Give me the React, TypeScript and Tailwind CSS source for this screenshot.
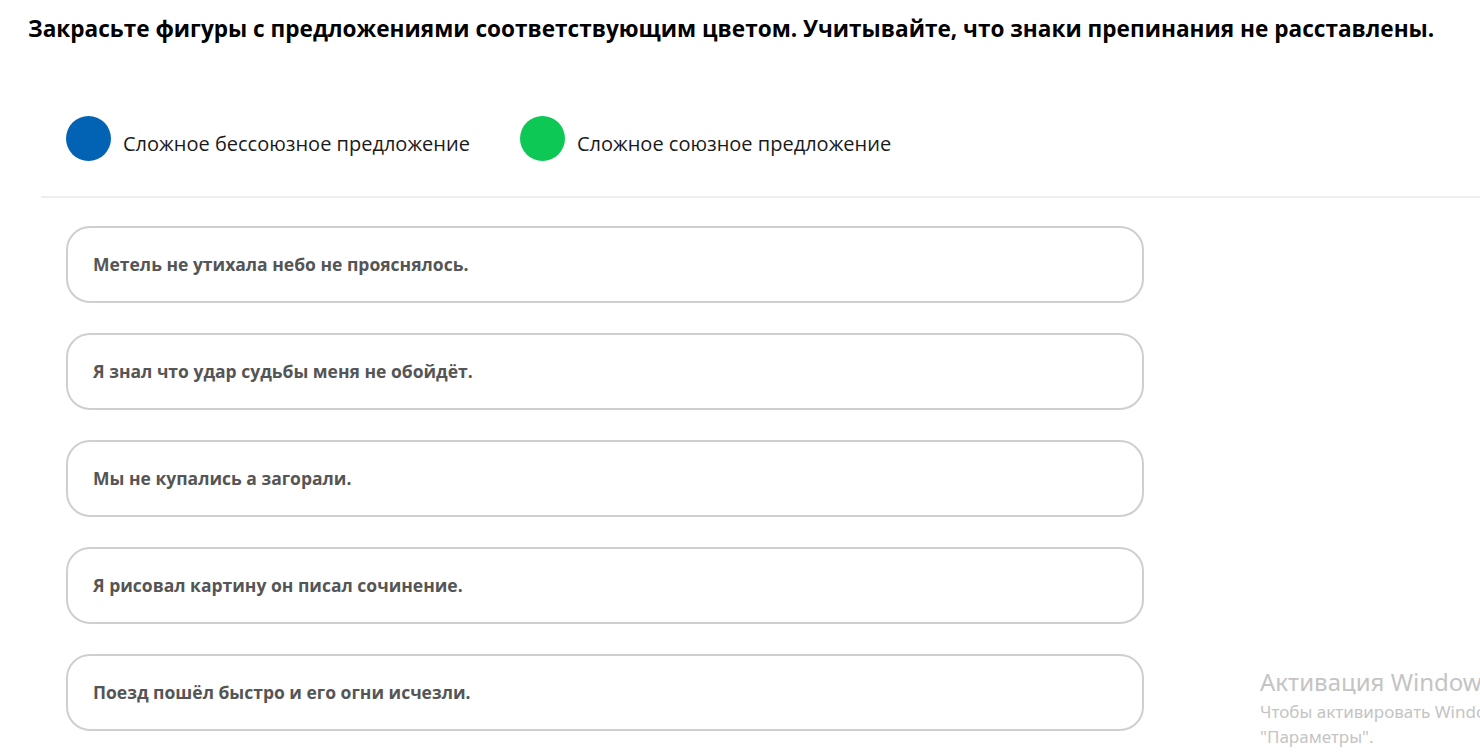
import React from "react";

const items = [
  "Метель не утихала небо не прояснялось.",
  "Я знал что удар судьбы меня не обойдёт.",
  "Мы не купались а загорали.",
  "Я рисовал картину он писал сочинение.",
  "Поезд пошёл быстро и его огни исчезли.",
];

export default function App() {
  return (
    <div
      className="relative w-[1480px] h-[756px] overflow-hidden bg-white"
      style={{ fontFamily: '"Open Sans", "Noto Sans", sans-serif' }}
    >
      <h1 className="pl-[28px] pt-[13px] text-[22.6px] leading-[32px] font-bold text-black whitespace-nowrap">
        Закрасьте фигуры с предложениями соответствующим цветом. Учитывайте, что знаки препинания не расставлены.
      </h1>
      <div className="ml-[41px] mt-[71px] border-b-2 border-[#eeeeee] pb-[35px]">
        <div className="flex items-center pl-[25px] gap-[50px]">
          <div className="flex items-center gap-[12px]">
            <div className="w-[45px] h-[45px] rounded-full bg-[#0263b4]" />
            <span className="text-[20px] text-[#1a1a1a] leading-[28px] mt-[10px]">Сложное бессоюзное предложение</span>
          </div>
          <div className="flex items-center gap-[12px]">
            <div className="w-[45px] h-[45px] rounded-full bg-[#0dc855]" />
            <span className="text-[20px] text-[#1a1a1a] leading-[28px] mt-[10px]">Сложное союзное предложение</span>
          </div>
        </div>
      </div>
      <div className="flex flex-col gap-[30px] pl-[66px] pt-[28px]">
        {items.map((t) => (
          <div
            key={t}
            className="w-[1078px] h-[77px] rounded-[24px] border-2 border-[#cfcfcf] flex items-center pl-[25px]"
          >
            <span className="text-[17.5px] font-bold text-[#555555]">{t}</span>
          </div>
        ))}
      </div>
      <div
        className="absolute left-[1260px] top-[666px] text-[#c4c4c4] whitespace-nowrap"
        style={{ fontFamily: '"Noto Sans", "Open Sans", sans-serif' }}
      >
        <div className="text-[24px] leading-[32px]">Активация Windows</div>
        <div className="text-[17px] leading-[28px]">Чтобы активировать Windows</div>
        <div className="text-[17px] leading-[22px]">"Параметры".</div>
      </div>
    </div>
  );
}
